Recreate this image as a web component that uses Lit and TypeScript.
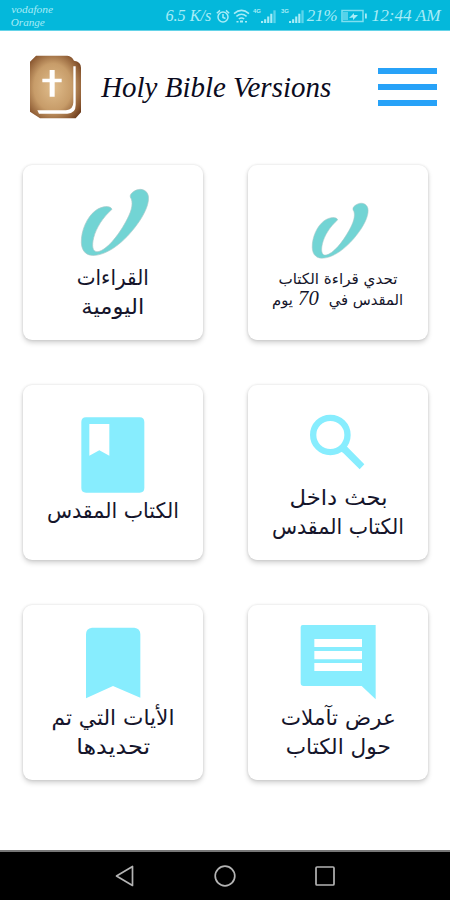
import { LitElement, html, svg, css, TemplateResult, SVGTemplateResult } from "lit";
import { customElement, property } from "lit/decorators.js";

/** One line of text, scaled horizontally so that it spans a given width. */
@customElement("fit-line")
class FitLine extends LitElement {
  @property({ type: Number }) span = 100;

  static styles = css`
    :host { display: flex; justify-content: center; white-space: pre; flex: none; }
    .ink { display: block; flex: none; }
  `;

  render() {
    return html`<span class="ink"><slot></slot></span>`;
  }

  firstUpdated() {
    this.style.width = `${this.span}px`;
    const ink = this.renderRoot.querySelector(".ink") as HTMLElement;
    const natural = ink.getBoundingClientRect().width;
    if (natural > 0) ink.style.transform = `scaleX(${this.span / natural})`;
  }
}

const quill = svg`<path class="teal" d="M306 163 C301 150 275 153 256 167 C231 186 213 227 214 263 C215 291 232 304 256 301 C302 296 352 252 388 199 C408 169 418 142 415 123 C411 102 388 98 372 109 C360 117 358 124 364 132 C370 150 363 172 347 201 C324 243 290 285 264 290 C247 292 245 272 251 248 C259 218 278 188 306 163Z"/>`;

interface Tile {
  icon: SVGTemplateResult;
  lines: { text: string | TemplateResult; span: number }[];
  kind?: string;
}

const tiles: Tile[] = [
  {
    icon: quill,
    lines: [{ text: "القراءات", span: 72 }, { text: "اليومية", span: 63 }],
  },
  {
    icon: svg`<g transform="translate(53.6 58.9) scale(.832)">${quill}</g>`,
    lines: [
      { text: "تحدي قراءة الكتاب", span: 119 },
      { text: html`المقدس في <span class="num"> 70 </span>يوم`, span: 131 },
    ],
    kind: "small",
  },
  {
    icon: svg`<path class="sky" fill-rule="evenodd" d="M228 127H389Q403 127 403 141V339Q403 353 389 353H228Q214 353 214 339V141Q214 127 228 127Z M238 147V242L268 226L298 242V147Z"/>`,
    lines: [{ text: "الكتاب المقدس", span: 132 }],
    kind: "low",
  },
  {
    icon: svg`<circle class="ring" cx="286" cy="180" r="51.5"/><path class="sky" d="M316 229 L334 213 L388 268 L374 283 L324 233Z"/>`,
    lines: [{ text: "بحث داخل", span: 98 }, { text: "الكتاب المقدس", span: 132 }],
  },
  {
    icon: svg`<path class="sky" d="M246 98H373Q391 100 391 118V308L309 273L228 310V118Q228 100 246 98Z"/>`,
    lines: [{ text: "الأيات التي تم", span: 123 }, { text: "تحديدها", span: 74 }],
  },
  {
    icon: svg`<path class="sky" fill-rule="evenodd" d="M203 90H422V313L380 273H206Q197 273 197 264V96Q197 90 203 90Z M238 132V156H381V132Z M238 168V193H381V168Z M238 204V228H381V204Z"/>`,
    lines: [{ text: "عرض تآملات", span: 115 }, { text: "حول الكتاب", span: 105 }],
  },
];

const bars = svg`<path d="M0 13h2.4v2.5H0zM3.5 11h2.4v4.5H3.5zM7 8h2.4v7.5H7zM10.5 5h2.4v10.5h-2.4z"/><path d="M14 1h2.6v14.5H14z" opacity=".55"/>`;

@customElement("app-root")
class AppRoot extends LitElement {
  static styles = css`
    :host {
      display: flex; flex-direction: column; width: 450px; height: 900px;
      background: #fff; color: #15152b; overflow: hidden;
      font-family: "DejaVu Sans", sans-serif;
    }
    svg { display: block; flex: none; }
    .status {
      height: 31px; flex: none; background: #04b8db; color: #a8ecf7;
      display: flex; align-items: center; padding: 0 9px 0 11px;
      border-bottom: 1px solid #64d3e8; box-sizing: border-box;
      font: italic 16.5px/20px "Liberation Serif", serif;
    }
    .carriers {
      flex: 1; font-size: 11px; line-height: 13.5px; padding-top: 2px;
      display: flex; flex-direction: column; align-items: flex-start;
    }
    .readout { display: flex; align-items: center; padding-top: 2px; }
    .g1 { margin-left: 5px; } .g2 { margin-left: 3px; } .g3 { margin-left: 5px; }
    .net { font: 700 6px/7px "Liberation Sans", sans-serif; align-self: flex-start; margin-top: 2px; }
    .line { fill: none; stroke: #a8ecf7; stroke-width: 1.5; }
    .pale { fill: #a8ecf7; }
    .header { height: 112px; flex: none; display: flex; align-items: center; padding: 0 13px 0 30px; }
    .title { margin-left: 20px; font: italic 29px/36px "Liberation Serif", serif; color: #0b0b20; }
    .menu { margin-left: auto; width: 59px; display: flex; flex-direction: column; gap: 10px; }
    .menu i { display: block; height: 6.3px; background: #27a2f8; }
    .grid {
      flex: 1; display: grid; grid-template-columns: 180px 180px; grid-auto-rows: 175px;
      gap: 45px; padding: 22px 22px 0 23px; align-content: start;
    }
    .card {
      background: #fff; border-radius: 9px; display: flex; flex-direction: column; align-items: center;
      box-shadow: 0 3px 5px rgba(0,0,0,.17), 0 0 3px rgba(0,0,0,.13);
    }
    .art { width: 180px; height: 97.6px; overflow: visible; }
    .low .art { margin-bottom: 13px; }
    .small .art { margin-bottom: 6px; }
    .label { font-size: 21.5px; line-height: 29px; direction: rtl; display: flex; flex-direction: column; align-items: center; }
    .small .label { font-size: 15px; line-height: 21.5px; }
    .num { font: italic 21px/14px "Liberation Serif", serif; }
    .teal { fill: #72d4d4; stroke: #a9c9c8; stroke-width: 2; }
    .sky { fill: #87edfe; }
    .ring { fill: none; stroke: #87edfe; stroke-width: 19; }
    .nav {
      height: 50px; flex: none; box-sizing: border-box; background: #000; border-top: 2px solid #777;
      display: flex; justify-content: center; align-items: center; gap: 76px;
    }
    .nav path, .nav circle, .nav rect { fill: none; stroke: #b4b4b4; stroke-width: 1.7; stroke-linejoin: round; }
  `;

  render() {
    return html`
      <div class="status">
        <div class="carriers">
          <fit-line span="42">vodafone</fit-line>
          <fit-line span="34">Orange</fit-line>
        </div>
        <div class="readout">
          <fit-line span="46">6.5 K/s</fit-line>
          <svg class="g1" width="14" height="15" viewBox="0 0 14 15">
            <circle class="line" cx="7" cy="8" r="5"/><path class="line" d="M7 5v3.5l2.5 1M.8 4.2 4 1.4M13.2 4.2 10 1.4"/>
          </svg>
          <svg class="g2" width="17" height="14" viewBox="0 0 17 14">
            <path class="line" d="M1 4.6Q8.5-1.8 16 4.6M3.4 7.4Q8.5 3 13.6 7.4M5.8 10Q8.5 7.8 11.2 10"/>
            <path class="pale" d="M7 11.5h3v2H7zM3.5 12h2v1.5h-2zM12 12h2v1.5h-2z"/>
          </svg>
          <span class="net g2">4G</span>
          <svg class="pale" width="15" height="15" viewBox="0 0 17 16">${bars}</svg>
          <span class="net g3">3G</span>
          <svg class="pale" width="15" height="15" viewBox="0 0 17 16">${bars}</svg>
          <fit-line class="g2" span="31">21%</fit-line>
          <svg class="g2" width="26" height="14" viewBox="0 0 26 14">
            <rect class="line" x="1" y="1.5" width="21" height="11" opacity=".75"/>
            <rect class="pale" x="2" y="3" width="5" height="8" opacity=".5"/>
            <path class="pale" d="M8 9l5-5v2h4l-5 5V8.6zM24 4.5h1.8v5H24z"/>
          </svg>
          <fit-line class="g3" span="69">12:44 AM</fit-line>
        </div>
      </div>

      <div class="header">
        <svg width="51" height="64" viewBox="0 0 153 192">
          <defs>
            <radialGradient id="hide" cx=".45" cy=".5" r=".68">
              <stop offset="0" stop-color="#e0bd8c"/><stop offset=".55" stop-color="#c79c69"/>
              <stop offset=".85" stop-color="#8f5d35"/><stop offset="1" stop-color="#6b3a1b"/>
            </radialGradient>
          </defs>
          <path fill="url(#hide)" d="M18 2H112Q126 4 132 17Q153 20 153 38V172L137 190H30L0 170V20Z"/>
          <path fill="#fff" d="M130 34H137V150Q137 176 112 176H27L22 166H108Q130 164 130 142Z"/>
          <path fill="#fff" d="M59 45H74V71H95V82H74V125H59V82H37V71H59Z"/>
        </svg>
        <fit-line class="title" span="230">Holy Bible Versions</fit-line>
        <div class="menu"><i></i><i></i><i></i></div>
      </div>

      <div class="grid">
        ${tiles.map((t) => html`
          <div class="card ${t.kind ?? ""}">
            <svg class="art" viewBox="39 30 540 292.8">${t.icon}</svg>
            <div class="label">
              ${t.lines.map((l) => html`<fit-line span=${l.span}>${l.text}</fit-line>`)}
            </div>
          </div>`)}
      </div>

      <div class="nav">
        <svg width="24" height="24" viewBox="0 0 24 24"><path d="M19.5 2.5V21.5L3.5 12Z"/></svg>
        <svg width="24" height="24" viewBox="0 0 24 24"><circle cx="12" cy="12" r="9.8"/></svg>
        <svg width="24" height="24" viewBox="0 0 24 24"><rect x="3" y="3" width="18" height="18" rx="1"/></svg>
      </div>
    `;
  }
}
